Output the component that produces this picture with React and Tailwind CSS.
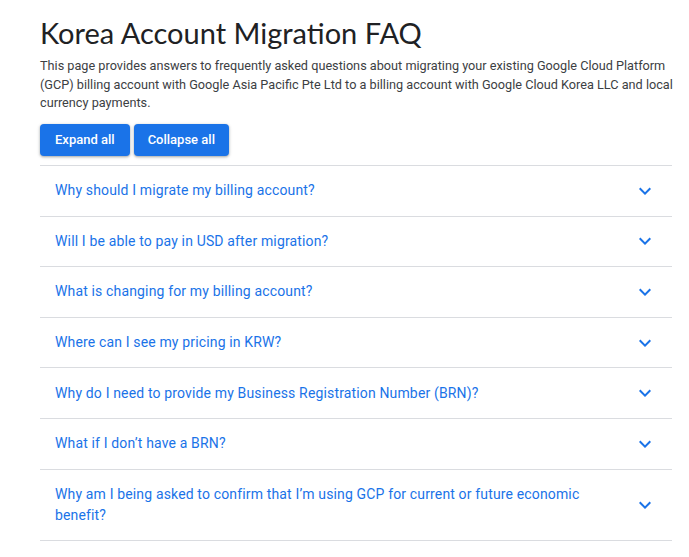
import React from 'react';

const questions = [
    'Why should I migrate my billing account?',
    'Will I be able to pay in USD after migration?',
    'What is changing for my billing account?',
    'Where can I see my pricing in KRW?',
    'Why do I need to provide my Business Registration Number (BRN)?',
    'What if I don\u2019t have a BRN?',
    'Why am I being asked to confirm that I\u2019m using GCP for current or future economic benefit?',
];

const ExpandMore = () => (
    <svg width="24" height="24" viewBox="0 0 24 24" className="shrink-0 -my-1 fill-[#1a73e8]">
        <path d="M16.59 8.59L12 13.17 7.41 8.59 6 10l6 6 6-6z" />
    </svg>
);

export default function App() {
    return (
        <div className="bg-white min-h-screen pl-10 pr-[17px] pt-[13px] font-['Roboto',sans-serif]">
            <h1 className="text-[29px] leading-[40px] text-[#202124] font-['Lato',sans-serif]">
                Korea Account Migration FAQ
            </h1>
            <p className="mt-[4px] -mr-[12px] text-[12.7px] leading-[18.5px] text-[#3c4043]">
                This page provides answers to frequently asked questions about migrating your existing Google Cloud Platform (GCP) billing account with Google Asia Pacific Pte Ltd to a billing account with Google Cloud Korea LLC and local currency payments.
            </p>
            <div className="flex gap-1 mt-[11.5px] mb-[9px]">
                <button className="h-8 px-[15px] rounded bg-[#1a73e8] text-white text-[13px] font-medium shadow-[0_1px_2px_rgba(60,64,67,0.3),0_1px_3px_1px_rgba(60,64,67,0.15)]">
                    Expand all
                </button>
                <button className="h-8 px-[14px] rounded bg-[#1a73e8] text-white text-[13px] font-medium shadow-[0_1px_2px_rgba(60,64,67,0.3),0_1px_3px_1px_rgba(60,64,67,0.15)]">
                    Collapse all
                </button>
            </div>
            <div className="border-t border-[#dadce0]">
                {questions.map((q, i) => (
                    <div key={i} className="flex items-center justify-between border-b border-[#dadce0] px-[15px] py-[14.3px]">
                        <span className="text-[14px] leading-[21px] text-[#1a73e8] tracking-[0.15px] max-w-[540px]">{q}</span>
                        <ExpandMore />
                    </div>
                ))}
            </div>
        </div>
    );
}
